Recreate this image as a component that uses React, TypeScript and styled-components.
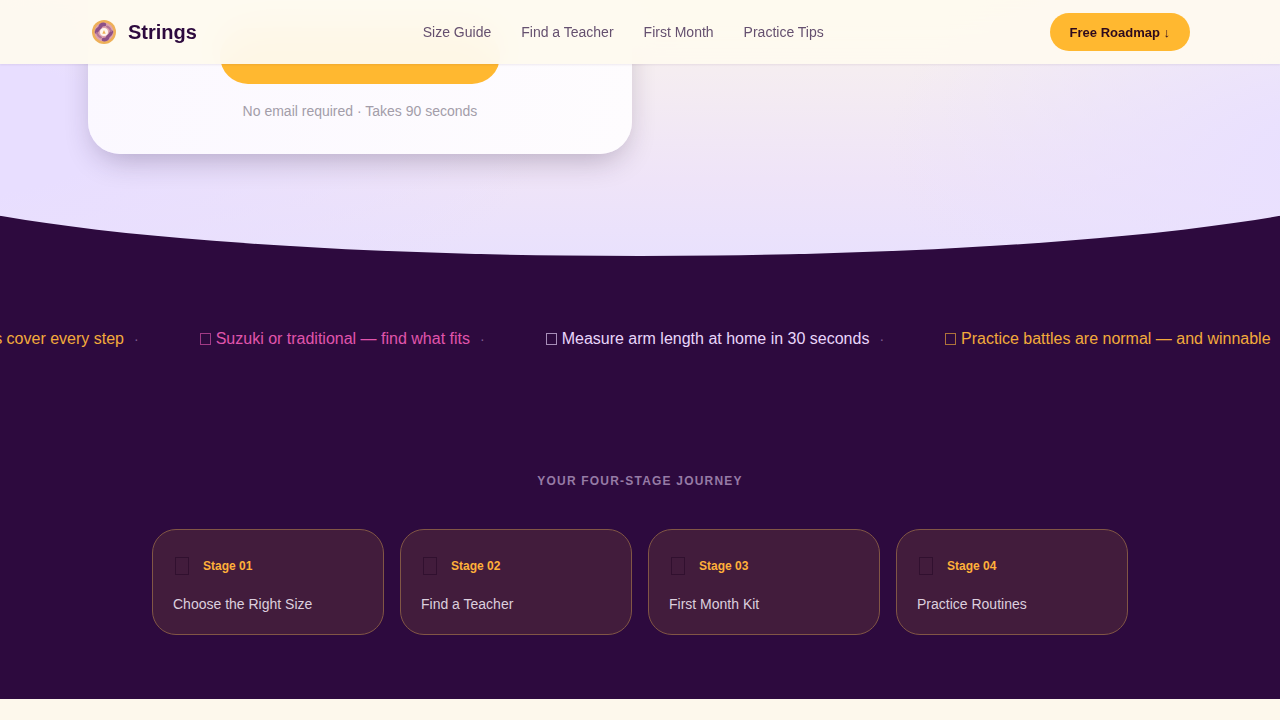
import React from "react";
import styled, { createGlobalStyle } from "styled-components";

const GlobalStyle = createGlobalStyle`
  * { box-sizing: border-box; }
  body {
    margin: 0;
    background: #fdf8ec;
    color: #2d0a3e;
    font-family: "Liberation Sans", Arial, sans-serif;
    font-size: 16px;
    line-height: 24px;
  }
`;

const Header = styled.header`
  position: fixed;
  top: 0;
  left: 0;
  right: 0;
  z-index: 10;
  height: 64px;
  background: rgba(254, 250, 239, 0.95);
  backdrop-filter: blur(20px);
  box-shadow: 0 1px 2px rgba(45, 10, 62, 0.08);
`;

const HeaderInner = styled.div`
  max-width: 1280px;
  height: 100%;
  margin: 0 auto;
  padding: 0 90px;
  display: flex;
  align-items: center;
  justify-content: space-between;
`;

const Brand = styled.a`
  display: flex;
  align-items: center;
  gap: 10px;
  color: #2d0a3e;
  font-size: 20px;
  font-weight: 700;
  text-decoration: none;
`;

const BrandMark = styled.svg`
  width: 28px;
  height: 28px;
`;

const Nav = styled.nav`
  display: flex;
  gap: 30px;
`;

const NavLink = styled.a`
  color: #65506f;
  font-size: 14px;
  text-decoration: none;
`;

const RoadmapButton = styled.button`
  height: 38px;
  padding: 0 20px;
  border: 0;
  border-radius: 19px;
  background: #ffb830;
  color: #2d0a1e;
  font: 700 13px "Liberation Sans", Arial, sans-serif;
  cursor: pointer;
`;

const Hero = styled.section`
  position: relative;
  overflow: hidden;
  background: #2d0a3e;
  padding-bottom: 102px;

  &::before {
    content: "";
    position: absolute;
    inset: 0 -10%;
    border-radius: 0 0 50% 50% / 0 0 90px 90px;
    background:
      radial-gradient(ellipse 40% 90% at 4% 50%, #e8deff 30%, rgba(232, 222, 255, 0) 100%),
      radial-gradient(ellipse 30% 100% at 96% 60%, #e9e0ff 10%, rgba(233, 224, 255, 0) 100%),
      linear-gradient(180deg, #f8efea 0%, #f5edf1 28%, #efe4f8 70%, #e9e1fd 100%);
  }
`;

const HeroInner = styled.div`
  position: relative;
  max-width: 1280px;
  margin: 0 auto;
  padding: 0 88px;
  display: grid;
  grid-template-columns: 1fr 1fr;
  gap: 16px;
`;

const QuizCard = styled.div`
  display: flex;
  flex-direction: column;
  align-items: center;
  gap: 16px;
  padding: 28px 32px 32px;
  border-radius: 0 0 32px 32px;
  background: linear-gradient(100deg, #fbf8ff, #fefcfe);
  box-shadow: 0 12px 30px -8px rgba(40, 20, 55, 0.3);
`;

const QuizButton = styled.button`
  width: 280px;
  height: 56px;
  border: 0;
  border-radius: 28px;
  background: #ffb830;
  cursor: pointer;
`;

const QuizNote = styled.p`
  margin: 0;
  color: #a39da9;
  font-size: 14px;
  line-height: 22px;
`;

const Journey = styled.section`
  background: #2d0a3e;
  padding: 71px 0 64px;
`;

const Ticker = styled.div`
  overflow: hidden;
`;

const TickerTrack = styled.ul`
  display: flex;
  width: max-content;
  margin: 0 0 0 -61px;
  padding: 0;
  list-style: none;
`;

const TickerItem = styled.li<{ $color: string }>`
  display: flex;
  align-items: center;
  padding-right: 61px;
  color: ${(p) => p.$color};
  white-space: nowrap;

  &::after {
    content: "·";
    margin-left: 10px;
    color: #7d5a91;
    font-size: 14px;
  }
`;

const TickerIcon = styled.span`
  width: 11px;
  height: 12px;
  margin-right: 5px;
  border: 1px solid currentColor;
  opacity: 0.65;
`;

const SectionLabel = styled.h2`
  margin: 118px 0 36px;
  color: #967ba5;
  font-size: 12px;
  font-weight: 700;
  letter-spacing: 0.1em;
  text-align: center;
  text-transform: uppercase;
`;

const Stages = styled.div`
  max-width: 1024px;
  margin: 0 auto;
  padding: 0 24px;
  display: grid;
  grid-template-columns: repeat(4, 1fr);
  gap: 16px;
`;

const StageCard = styled.a`
  display: flex;
  flex-direction: column;
  gap: 10px;
  padding: 20px 20px 18px;
  border: 1px solid #815645;
  border-radius: 24px;
  background: #421c3c;
  text-decoration: none;
`;

const StageHead = styled.div`
  display: flex;
  align-items: center;
  gap: 12px;
  height: 32px;
`;

const StageIcon = styled.span`
  width: 14px;
  height: 18px;
  margin: 0 2px;
  border: 1px solid #31102f;
`;

const StageNumber = styled.span`
  color: #ffb03a;
  font-size: 12px;
  font-weight: 700;
`;

const StageTitle = styled.span`
  color: #dccfde;
  font-size: 14px;
`;

const navLinks = ["Size Guide", "Find a Teacher", "First Month", "Practice Tips"];

const tickerItems = [
  { text: "guides cover every step", color: "#f3aa3b" },
  { text: "Suzuki or traditional — find what fits", color: "#e055ac" },
  { text: "Measure arm length at home in 30 seconds", color: "#e9d6fb" },
  { text: "Practice battles are normal — and winnable", color: "#f3aa3b" },
];

const stages = [
  "Choose the Right Size",
  "Find a Teacher",
  "First Month Kit",
  "Practice Routines",
];

function Logo() {
  return (
    <BrandMark viewBox="0 0 28 28" aria-hidden="true">
      <circle cx="14" cy="14" r="12" fill="#eeb058" />
      <circle cx="14" cy="14" r="9.600" fill="#e0a3ad" />
      <path d="M6.500 14C7 11.500 8.500 10.500 10 9.500C10.500 7 12.500 6.200 14.500 6.500" fill="none" stroke="#8d5188" strokeWidth="3.600" strokeLinecap="round" />
      <path d="M21.500 14C21 16.500 19.500 17.500 18 18.500C17.500 21 15.500 21.800 13.500 21.500" fill="none" stroke="#8d5188" strokeWidth="3.600" strokeLinecap="round" />
      <path d="M7 15C8 18 9 19 11 19.500M21 13C20 10 19 9 17 8.500" fill="none" stroke="#b27598" strokeWidth="2" strokeLinecap="round" />
      <circle cx="14" cy="14" r="4" fill="#fff8ee" />
      <path d="M12.300 15.800L14 12L15.700 15.800Z" fill="#eeb058" />
    </BrandMark>
  );
}

export default function App() {
  return (
    <>
      <GlobalStyle />
      <Header>
        <HeaderInner>
          <Brand href="#">
            <Logo />
            Strings
          </Brand>
          <Nav>
            {navLinks.map((label) => (
              <NavLink key={label} href="#">{label}</NavLink>
            ))}
          </Nav>
          <RoadmapButton type="button">Free Roadmap ↓</RoadmapButton>
        </HeaderInner>
      </Header>
      <main>
        <Hero>
          <HeroInner>
            <QuizCard>
              <QuizButton type="button" aria-label="Start the quiz" />
              <QuizNote>No email required · Takes 90 seconds</QuizNote>
            </QuizCard>
          </HeroInner>
        </Hero>
        <Journey>
          <Ticker>
            <TickerTrack>
              {tickerItems.map((item) => (
                <TickerItem key={item.text} $color={item.color}>
                  <TickerIcon />
                  {item.text}
                </TickerItem>
              ))}
            </TickerTrack>
          </Ticker>
          <SectionLabel>Your four-stage journey</SectionLabel>
          <Stages>
            {stages.map((title, i) => (
              <StageCard key={title} href="#">
                <StageHead>
                  <StageIcon />
                  <StageNumber>Stage 0{i + 1}</StageNumber>
                </StageHead>
                <StageTitle>{title}</StageTitle>
              </StageCard>
            ))}
          </Stages>
        </Journey>
      </main>
    </>
  );
}
